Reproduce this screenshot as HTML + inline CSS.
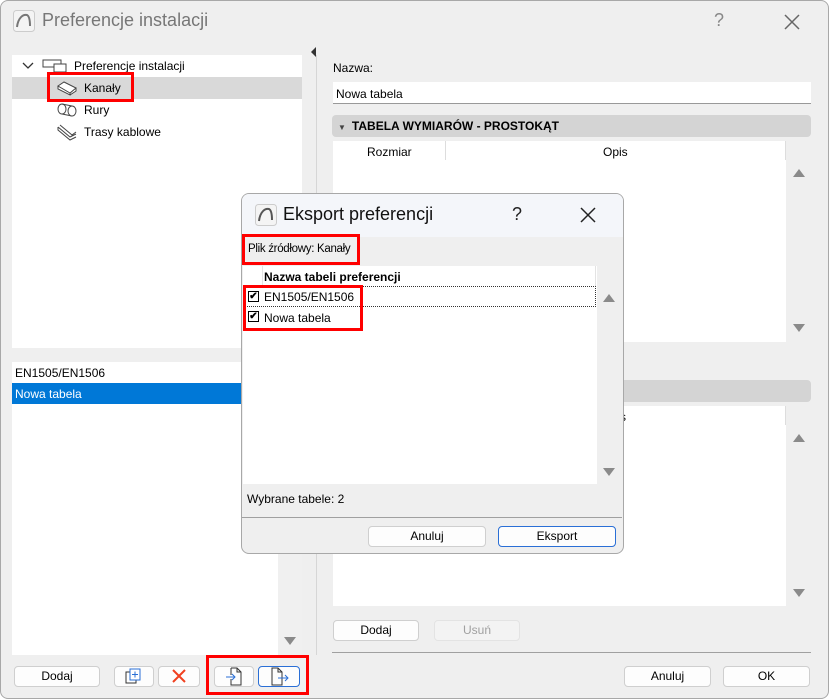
<!DOCTYPE html>
<html><head><meta charset="utf-8"><style>
*{box-sizing:border-box;margin:0;padding:0}
body{width:829px;height:699px;background:#fff;font-family:"Liberation Sans",sans-serif;font-size:12px;color:#000;position:relative;overflow:hidden}
.a{position:absolute}
.win{left:0;top:0;width:829px;height:699px;background:#efefef;border:1px solid #a8a8a8;border-radius:8px}
.white{background:#fff}
.btn{position:absolute;background:#fdfdfd;border:1px solid #cfcfcf;border-radius:4px;text-align:center;line-height:18px;font-size:12px}
.red{position:absolute;border:3px solid #f00}
.tri-up{position:absolute;width:0;height:0;border-left:6px solid transparent;border-right:6px solid transparent;border-bottom:8px solid #8a8a8a}
.tri-dn{position:absolute;width:0;height:0;border-left:6px solid transparent;border-right:6px solid transparent;border-top:8px solid #8a8a8a}
.hdr{position:absolute;background:#d4d4d4;border-radius:4px;font-weight:bold;line-height:22px}
.cb{position:absolute;width:11px;height:11px;border:1px solid #000;background:#fff;font-size:10px;line-height:9px;text-align:center;font-weight:bold}
</style></head><body>
<div class="a win"></div>
<!-- title -->
<svg class="a" style="left:13px;top:10px" width="22" height="22"><rect x="0.5" y="0.5" width="21" height="21" rx="3" fill="#f4f4f4" stroke="#ccc"/><path d="M4 17 C5 8 10 4 14 5 C16 6 17 9 17 16" fill="none" stroke="#777" stroke-width="2"/></svg>
<div class="a" style="left:42px;top:10px;font-size:18px;color:#777">Preferencje instalacji</div>
<div class="a" style="left:714px;top:10px;font-size:18px;color:#888">?</div>
<svg class="a" style="left:784px;top:14px" width="16" height="16"><path d="M1 1L15 15M15 1L1 15" stroke="#666" stroke-width="1.5"/></svg>

<!-- tree -->
<div class="a white" style="left:12px;top:55px;width:290px;height:293px"></div>
<div class="a" style="left:12px;top:77px;width:290px;height:22px;background:#d9d9d9"></div>
<svg class="a" style="left:22px;top:61px" width="12" height="10"><path d="M1 2L6 7L11 2" fill="none" stroke="#333" stroke-width="1.3"/></svg>
<svg class="a" style="left:42px;top:58px" width="28" height="16"><rect x="1" y="2" width="18" height="7" fill="#fff" stroke="#444"/><rect x="12" y="6" width="12" height="8" fill="#fff" stroke="#444"/></svg>
<div class="a" style="left:74px;top:59px">Preferencje instalacji</div>
<svg class="a" style="left:56px;top:80px" width="22" height="16"><path d="M2 6L8 2L20 8L14 13Z M2 6L2 9L14 15L14 13 M14 15L20 11L20 8" fill="#fff" stroke="#444"/></svg>
<div class="a" style="left:84px;top:81px">Kanały</div>
<svg class="a" style="left:56px;top:102px" width="22" height="16"><ellipse cx="6" cy="7" rx="4" ry="5" fill="#fff" stroke="#444"/><path d="M6 2L16 4M6 12L16 14" stroke="#444"/><ellipse cx="16" cy="9" rx="4" ry="5" fill="#fff" stroke="#444"/></svg>
<div class="a" style="left:84px;top:103px">Rury</div>
<svg class="a" style="left:56px;top:123px" width="22" height="18"><path d="M2 4L14 14L20 11M4 2L16 12L20 9M2 4L2 7L14 17L20 14" fill="none" stroke="#444"/></svg>
<div class="a" style="left:84px;top:125px">Trasy kablowe</div>
<div class="red" style="left:47px;top:72px;width:87px;height:30px"></div>
<svg class="a" style="left:311px;top:47px" width="6" height="10"><path d="M5 0L0 5L5 10Z" fill="#333"/></svg>
<div class="a" style="left:316px;top:55px;width:1px;height:600px;background:#d6d6d6"></div>

<!-- left list -->
<div class="a white" style="left:12px;top:362px;width:266px;height:293px"></div>
<div class="a" style="left:278px;top:362px;width:24px;height:293px;background:#f0f0f0"></div>
<div class="tri-dn" style="left:284px;top:637px"></div>
<div class="a" style="left:15px;top:366px">EN1505/EN1506</div>
<div class="a" style="left:12px;top:383px;width:230px;height:21px;background:#0078d7"></div>
<div class="a" style="left:15px;top:387px;color:#fff">Nowa tabela</div>

<div class="btn" style="left:14px;top:666px;width:86px;height:21px">Dodaj</div>
<div class="btn" style="left:114px;top:666px;width:40px;height:21px"></div>
<svg class="a" style="left:124px;top:667px" width="18" height="18"><rect x="2" y="5" width="10" height="11" fill="#fff" stroke="#333"/><rect x="6" y="2" width="10" height="11" fill="#fff" stroke="#2a6fd6"/><path d="M11 4.5V10.5M8 7.5H14" stroke="#2a6fd6"/></svg>
<div class="btn" style="left:158px;top:666px;width:42px;height:21px"></div>
<svg class="a" style="left:171px;top:668px" width="16" height="16"><path d="M2 2L14 14M14 2L2 14" stroke="#f04020" stroke-width="2"/></svg>
<div class="btn" style="left:214px;top:666px;width:40px;height:21px"></div>
<svg class="a" style="left:224px;top:667px" width="20" height="19"><path d="M7 1H13L17 5V18H7V12M7 8V1M13 1V5H17" fill="none" stroke="#333"/><path d="M2 10H11M8 7L11 10L8 13" fill="none" stroke="#2a6fd6"/></svg>
<div class="btn" style="left:258px;top:666px;width:42px;height:21px;border-color:#2a6fd6"></div>
<svg class="a" style="left:270px;top:667px" width="22" height="19"><path d="M2 1H8L12 5V18H2Z M8 1V5H12" fill="none" stroke="#333"/><path d="M8 11H18M15 8L18 11L15 14" fill="none" stroke="#2a6fd6"/></svg>
<div class="red" style="left:206px;top:655px;width:103px;height:40px"></div>

<!-- right panel -->
<div class="a" style="left:333px;top:61px">Nazwa:</div>
<div class="a white" style="left:333px;top:82px;width:478px;height:22px;border-bottom:1px solid #999"></div>
<div class="a" style="left:336px;top:87px">Nowa tabela</div>
<div class="hdr" style="left:332px;top:115px;width:479px;height:22px"><span style="font-size:8px;color:#444;margin-left:6px">▼</span><span style="margin-left:6px">TABELA WYMIARÓW - PROSTOKĄT</span></div>
<div class="a white" style="left:333px;top:141px;width:453px;height:201px"></div>
<div class="a" style="left:445px;top:141px;width:1px;height:19px;background:#ddd"></div>
<div class="a" style="left:785px;top:141px;width:1px;height:19px;background:#ddd"></div>
<div class="a" style="left:367px;top:145px">Rozmiar</div>
<div class="a" style="left:603px;top:145px">Opis</div>
<div class="tri-up" style="left:793px;top:169px"></div>
<div class="tri-dn" style="left:793px;top:324px"></div>
<div class="hdr" style="left:332px;top:380px;width:479px;height:22px"></div>
<div class="a white" style="left:333px;top:406px;width:453px;height:200px"></div>
<div class="a" style="left:785px;top:406px;width:1px;height:19px;background:#ddd"></div>
<div class="a" style="left:620px;top:410px">s</div>
<div class="tri-up" style="left:793px;top:434px"></div>
<div class="tri-dn" style="left:793px;top:589px"></div>
<div class="btn" style="left:333px;top:620px;width:86px;height:21px">Dodaj</div>
<div class="btn" style="left:434px;top:620px;width:86px;height:21px;background:#f3f3f3;border-color:#e3e3e3;color:#a0a0a0">Usuń</div>
<div class="a" style="left:332px;top:652px;width:479px;height:1px;background:#a0a0a0"></div>
<div class="btn" style="left:624px;top:666px;width:87px;height:21px">Anuluj</div>
<div class="btn" style="left:723px;top:666px;width:87px;height:21px">OK</div>

<!-- dialog -->
<div class="a" style="left:241px;top:193px;width:383px;height:361px;background:#efefef;border:1px solid #a8a8a8;border-radius:8px;overflow:hidden">
<div class="a" style="left:0;top:0;width:383px;height:43px;background:#f4f6fa"></div>
</div>
<svg class="a" style="left:255px;top:204px" width="22" height="22"><rect x="0.5" y="0.5" width="21" height="21" rx="3" fill="#f4f4f4" stroke="#ccc"/><path d="M4 17 C5 8 10 4 14 5 C16 6 17 9 17 16" fill="none" stroke="#555" stroke-width="2"/></svg>
<div class="a" style="left:283px;top:204px;font-size:18px;color:#111">Eksport preferencji</div>
<div class="a" style="left:512px;top:204px;font-size:18px;color:#222">?</div>
<svg class="a" style="left:580px;top:207px" width="16" height="16"><path d="M1 1L15 15M15 1L1 15" stroke="#222" stroke-width="1.5"/></svg>
<div class="a" style="left:248px;top:243px;font-size:11.5px;letter-spacing:-0.3px">Plik źródłowy: Kanały</div>
<div class="red" style="left:242px;top:234px;width:118px;height:31px"></div>
<div class="a white" style="left:243px;top:266px;width:354px;height:218px"></div>
<div class="a" style="left:262px;top:266px;width:1px;height:20px;background:#e3e3e3"></div>
<div class="a" style="left:595px;top:266px;width:1px;height:20px;background:#e3e3e3"></div>
<div class="a" style="left:264px;top:270px;font-weight:bold">Nazwa tabeli preferencji</div>
<div class="a" style="left:244px;top:286px;width:352px;height:21px;border:1px dotted #333"></div>
<div class="cb" style="left:248px;top:291px">✔</div>
<div class="a" style="left:264px;top:290px">EN1505/EN1506</div>
<div class="cb" style="left:248px;top:311px">✔</div>
<div class="a" style="left:264px;top:311px">Nowa tabela</div>
<div class="red" style="left:243px;top:285px;width:120px;height:46px"></div>
<div class="tri-up" style="left:603px;top:294px"></div>
<div class="tri-dn" style="left:603px;top:468px"></div>
<div class="a" style="left:247px;top:492px">Wybrane tabele: 2</div>
<div class="a" style="left:242px;top:517px;width:380px;height:1px;background:#a0a0a0"></div>
<div class="btn" style="left:368px;top:526px;width:118px;height:21px">Anuluj</div>
<div class="btn" style="left:498px;top:526px;width:118px;height:21px;border-color:#2a6fd6">Eksport</div>
</body></html>
